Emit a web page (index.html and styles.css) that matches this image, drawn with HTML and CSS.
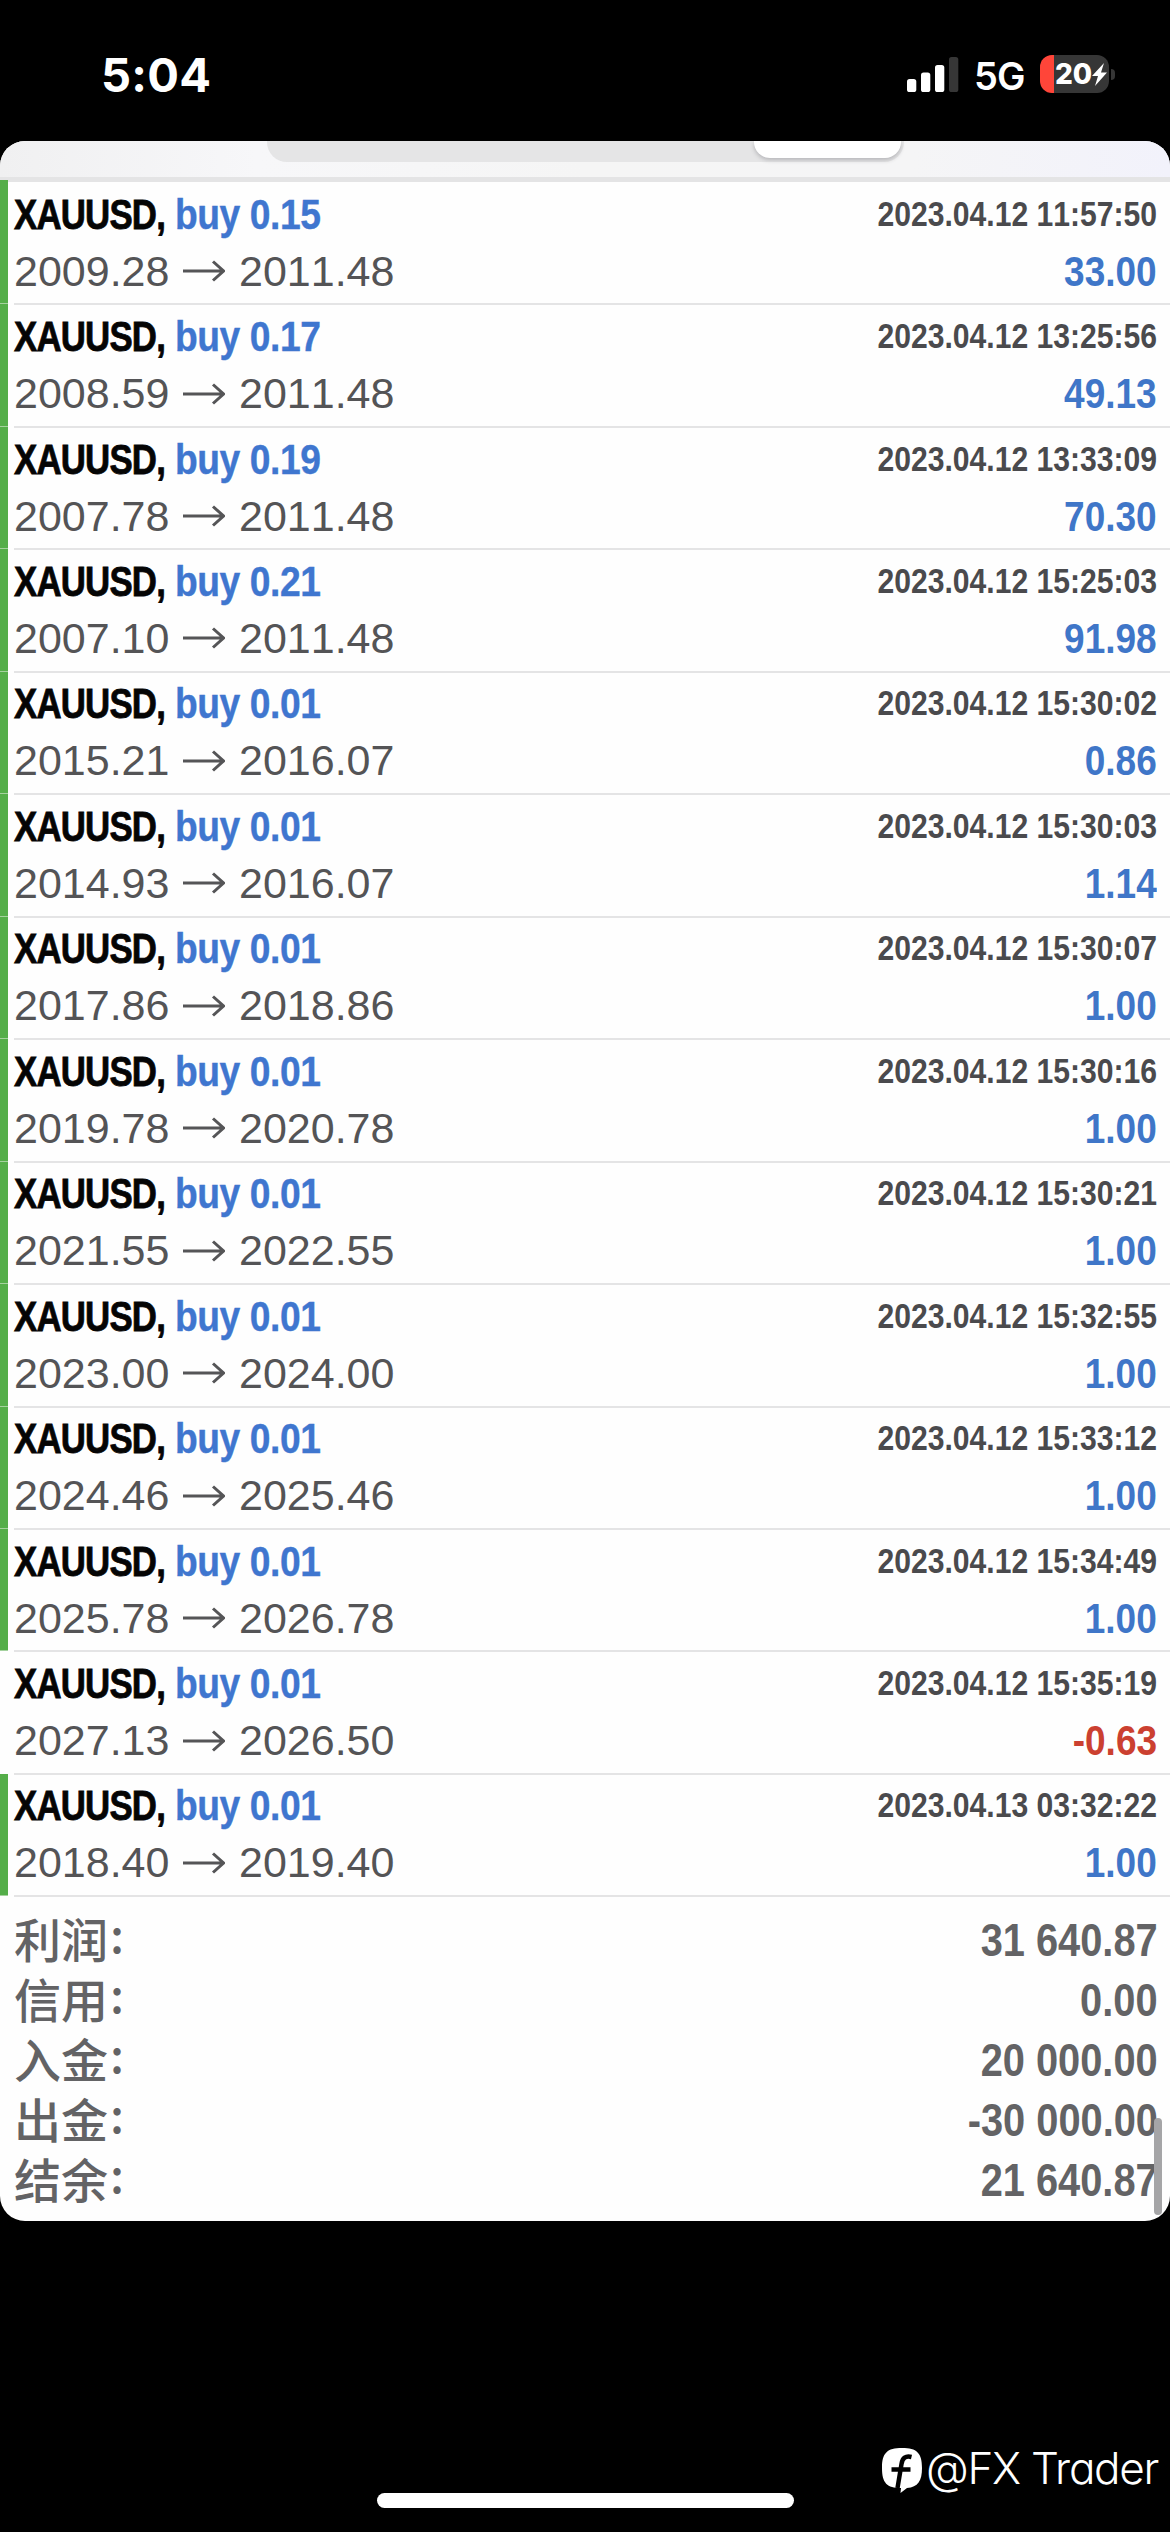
FILE: index.html
```html
<!DOCTYPE html>
<html lang="zh-CN">
<head>
<meta charset="utf-8">
<title>History</title>
<link rel="stylesheet" href="styles.css">
</head>
<body>
<header class="status">
  <span class="clock">5:04</span>
  <span class="spacer"></span>
  <svg class="signal" width="52" height="35" viewBox="0 0 52 35"><g fill="#fff"><rect x="0" y="22" width="9.3" height="13" rx="2.6"/><rect x="14" y="15.500" width="9.300" height="19.500" rx="2.600"/><rect x="28" y="8" width="9.300" height="27" rx="2.600"/></g><rect x="42" y="0" width="9.300" height="35" rx="2.600" fill="#363636"/></svg>
  <span class="network">5G</span>
  <div class="battery"><span class="level">20</span><svg width="15" height="23" viewBox="0 0 15 23"><path d="M12 0 0 13h6L3 23 15 9.500H9z" fill="#fff"/></svg></div>
  <span class="nub"></span>
</header>
<main class="card">
  <div class="toolbar"><div class="segments"><div class="selected"></div></div></div>
  <ul class="deals">
    <li class="deal win"><div class="line"><b class="symbol">XAUUSD,</b><b class="side">buy 0.15</b><b class="time">2023.04.12 11:57:50</b></div><div class="line"><span class="price">2009.28</span><svg class="arrow" viewBox="0 0 42 22"><path d="M0 11h40M30 1.500 40.500 11 30 20.500"/></svg><span class="price">2011.48</span><b class="profit">33.00</b></div></li>
    <li class="deal win"><div class="line"><b class="symbol">XAUUSD,</b><b class="side">buy 0.17</b><b class="time">2023.04.12 13:25:56</b></div><div class="line"><span class="price">2008.59</span><svg class="arrow" viewBox="0 0 42 22"><path d="M0 11h40M30 1.500 40.500 11 30 20.500"/></svg><span class="price">2011.48</span><b class="profit">49.13</b></div></li>
    <li class="deal win"><div class="line"><b class="symbol">XAUUSD,</b><b class="side">buy 0.19</b><b class="time">2023.04.12 13:33:09</b></div><div class="line"><span class="price">2007.78</span><svg class="arrow" viewBox="0 0 42 22"><path d="M0 11h40M30 1.500 40.500 11 30 20.500"/></svg><span class="price">2011.48</span><b class="profit">70.30</b></div></li>
    <li class="deal win"><div class="line"><b class="symbol">XAUUSD,</b><b class="side">buy 0.21</b><b class="time">2023.04.12 15:25:03</b></div><div class="line"><span class="price">2007.10</span><svg class="arrow" viewBox="0 0 42 22"><path d="M0 11h40M30 1.500 40.500 11 30 20.500"/></svg><span class="price">2011.48</span><b class="profit">91.98</b></div></li>
    <li class="deal win"><div class="line"><b class="symbol">XAUUSD,</b><b class="side">buy 0.01</b><b class="time">2023.04.12 15:30:02</b></div><div class="line"><span class="price">2015.21</span><svg class="arrow" viewBox="0 0 42 22"><path d="M0 11h40M30 1.500 40.500 11 30 20.500"/></svg><span class="price">2016.07</span><b class="profit">0.86</b></div></li>
    <li class="deal win"><div class="line"><b class="symbol">XAUUSD,</b><b class="side">buy 0.01</b><b class="time">2023.04.12 15:30:03</b></div><div class="line"><span class="price">2014.93</span><svg class="arrow" viewBox="0 0 42 22"><path d="M0 11h40M30 1.500 40.500 11 30 20.500"/></svg><span class="price">2016.07</span><b class="profit">1.14</b></div></li>
    <li class="deal win"><div class="line"><b class="symbol">XAUUSD,</b><b class="side">buy 0.01</b><b class="time">2023.04.12 15:30:07</b></div><div class="line"><span class="price">2017.86</span><svg class="arrow" viewBox="0 0 42 22"><path d="M0 11h40M30 1.500 40.500 11 30 20.500"/></svg><span class="price">2018.86</span><b class="profit">1.00</b></div></li>
    <li class="deal win"><div class="line"><b class="symbol">XAUUSD,</b><b class="side">buy 0.01</b><b class="time">2023.04.12 15:30:16</b></div><div class="line"><span class="price">2019.78</span><svg class="arrow" viewBox="0 0 42 22"><path d="M0 11h40M30 1.500 40.500 11 30 20.500"/></svg><span class="price">2020.78</span><b class="profit">1.00</b></div></li>
    <li class="deal win"><div class="line"><b class="symbol">XAUUSD,</b><b class="side">buy 0.01</b><b class="time">2023.04.12 15:30:21</b></div><div class="line"><span class="price">2021.55</span><svg class="arrow" viewBox="0 0 42 22"><path d="M0 11h40M30 1.500 40.500 11 30 20.500"/></svg><span class="price">2022.55</span><b class="profit">1.00</b></div></li>
    <li class="deal win"><div class="line"><b class="symbol">XAUUSD,</b><b class="side">buy 0.01</b><b class="time">2023.04.12 15:32:55</b></div><div class="line"><span class="price">2023.00</span><svg class="arrow" viewBox="0 0 42 22"><path d="M0 11h40M30 1.500 40.500 11 30 20.500"/></svg><span class="price">2024.00</span><b class="profit">1.00</b></div></li>
    <li class="deal win"><div class="line"><b class="symbol">XAUUSD,</b><b class="side">buy 0.01</b><b class="time">2023.04.12 15:33:12</b></div><div class="line"><span class="price">2024.46</span><svg class="arrow" viewBox="0 0 42 22"><path d="M0 11h40M30 1.500 40.500 11 30 20.500"/></svg><span class="price">2025.46</span><b class="profit">1.00</b></div></li>
    <li class="deal win"><div class="line"><b class="symbol">XAUUSD,</b><b class="side">buy 0.01</b><b class="time">2023.04.12 15:34:49</b></div><div class="line"><span class="price">2025.78</span><svg class="arrow" viewBox="0 0 42 22"><path d="M0 11h40M30 1.500 40.500 11 30 20.500"/></svg><span class="price">2026.78</span><b class="profit">1.00</b></div></li>
    <li class="deal"><div class="line"><b class="symbol">XAUUSD,</b><b class="side">buy 0.01</b><b class="time">2023.04.12 15:35:19</b></div><div class="line"><span class="price">2027.13</span><svg class="arrow" viewBox="0 0 42 22"><path d="M0 11h40M30 1.500 40.500 11 30 20.500"/></svg><span class="price">2026.50</span><b class="profit loss">-0.63</b></div></li>
    <li class="deal win"><div class="line"><b class="symbol">XAUUSD,</b><b class="side">buy 0.01</b><b class="time">2023.04.13 03:32:22</b></div><div class="line"><span class="price">2018.40</span><svg class="arrow" viewBox="0 0 42 22"><path d="M0 11h40M30 1.500 40.500 11 30 20.500"/></svg><span class="price">2019.40</span><b class="profit">1.00</b></div></li>
  </ul>
  <dl class="totals">
    <div class="total"><dt>利润<i>:</i></dt><dd>31 640.87</dd></div>
    <div class="total"><dt>信用<i>:</i></dt><dd>0.00</dd></div>
    <div class="total"><dt>入金<i>:</i></dt><dd>20 000.00</dd></div>
    <div class="total"><dt>出金<i>:</i></dt><dd>-30 000.00</dd></div>
    <div class="total"><dt>结余<i>:</i></dt><dd>21 640.87</dd></div>
  </dl>
  <div class="scrollbar"></div>
</main>
<footer class="footer">
  <div class="credit">
    <svg width="40" height="45" viewBox="0 0 40 45"><path d="M20 0C35 0 40 5 40 20c0 13-4 19-15 20L18.500 45l.5-5C5 40 0 35 0 20 0 5 5 0 20 0z" fill="#fff"/><path d="M29.500 9c-6-1.500-9 1-10 7L15.500 40M9.500 21.500h19" fill="none" stroke="#000" stroke-width="4.500"/></svg>
    <span>@FX Trader</span>
  </div>
  <div class="home"></div>
</footer>
</body>
</html>
```
FILE: styles.css
```css
* { box-sizing: border-box; }
body {
  margin: 0;
  width: 1170px;
  height: 2532px;
  display: flex;
  flex-direction: column;
  background: #000;
  overflow: hidden;
  font-family: "Liberation Sans", "Noto Sans CJK SC", sans-serif;
}
ul, dl, dd { margin: 0; padding: 0; list-style: none; }

.status {
  height: 141px;
  padding: 0 55px 0 101px;
  display: flex;
  align-items: center;
  color: #fff;
  font-family: Inter, sans-serif;
}
.clock { font-size: 47px; font-weight: 700; line-height: 50px; letter-spacing: .3px; margin-top: 8px; }
.spacer { flex: 1; }
.signal { margin: 7px 15px 0 0; }
.network {
  width: 50px;
  margin: 11px 16px 0 0;
  font-size: 38px;
  font-weight: 600;
  line-height: 44px;
  letter-spacing: -1px;
}
.battery {
  width: 69px;
  height: 38px;
  margin-top: 7px;
  padding-left: 15px;
  display: flex;
  align-items: center;
  gap: 1px;
  border-radius: 12px;
  background: linear-gradient(90deg, #ff4539 14px, #363636 14px);
}
.level { width: 36px; font-size: 28px; font-weight: 800; line-height: 38px; }
.nub { width: 4px; height: 11px; margin: 7px 0 0 2px; border-radius: 0 5px 5px 0; background: #363636; }

.card {
  position: relative;
  height: 2080px;
  border-radius: 25px;
  background: #fefefe;
  overflow: hidden;
}
.toolbar {
  height: 41px;
  border-bottom: 5px solid #e4e4e5;
  background: linear-gradient(90deg, #f0f0f1, #f7f7f9 22%, #f5f5f5 50%, #f5f5f6 78%, #f2f2fb);
}
.segments {
  width: 637px;
  height: 21px;
  margin-left: 267px;
  padding-right: 3px;
  display: flex;
  justify-content: flex-end;
  border-radius: 0 0 20px 20px;
  background: #e5e5e6;
}
.selected {
  width: 147px;
  height: 17px;
  border-radius: 0 0 16px 16px;
  background: #fff;
  box-shadow: 0 2px 4px #b5b5b8;
}
.deals { font-kerning: none; }
.deal {
  position: relative;
  height: 122.46px;
  padding: 3.6px 13px 0 14px;
}
.deal::after {
  content: "";
  position: absolute;
  inset: auto 0 -1px 14px;
  height: 2px;
  background: #e4e4e5;
}
.win::before {
  content: "";
  position: absolute;
  inset: 0 auto 0 0;
  width: 8px;
  border-bottom: 1px solid #a4d29e;
  background: #54ae49;
}
.win:first-child::before { top: -2px; }
.line { height: 57px; display: flex; align-items: center; line-height: 57px; white-space: nowrap; font-size: 43px; }
.symbol { width: 161px; color: #050505; letter-spacing: -1px; -webkit-text-stroke: .8px #050505; transform: scaleX(.81); transform-origin: left; }
.side { width: 180px; color: #3f76cf; letter-spacing: -.5px; -webkit-text-stroke: .4px #3f76cf; transform: scaleX(.865); transform-origin: left; }
.time { margin: -2px 0 0 auto; font-size: 35px; color: #4a4a4d; transform: scaleX(.86); transform-origin: right; }
.price { width: 156px; color: #545456; }
.arrow { width: 42px; height: 22px; margin: 0 14px 0 13px; fill: none; stroke: #555557; stroke-width: 3; }
.profit { margin-left: auto; color: #3f76c8; transform: scaleX(.86); transform-origin: right; }
.loss { color: #cb4030; }

.totals { padding: 15px 12px 0 14px; }
.total {
  height: 59.8px;
  display: flex;
  justify-content: space-between;
  line-height: 59.8px;
  font-size: 46px;
  color: #636365;
}
dt { display: flex; font-family: "Noto Sans CJK SC", sans-serif; font-size: 47px; font-weight: 500; margin-top: -3px; }
dt i { font-style: normal; margin: -5px 0 0 2px; }
dd { font-weight: 700; transform: scaleX(.865); transform-origin: right; }
.scrollbar {
  position: absolute;
  right: 8px;
  bottom: 6px;
  width: 8px;
  height: 97px;
  border-radius: 4px;
  background: #a5a5a7;
}
.footer { flex: 1; display: flex; flex-direction: column; padding: 227px 12px 0 13px; }
.credit {
  height: 45px;
  display: flex;
  align-items: center;
  justify-content: flex-end;
  gap: 4px;
  color: #fff;
  font: 300 44px/45px Inter, sans-serif;
  font-feature-settings: "cv11";
}
.credit span { white-space: nowrap; letter-spacing: -1.3px; margin-top: -5px; }
.home { width: 417px; height: 15px; margin-left: 364px; border-radius: 8px; background: #fff; }
```
